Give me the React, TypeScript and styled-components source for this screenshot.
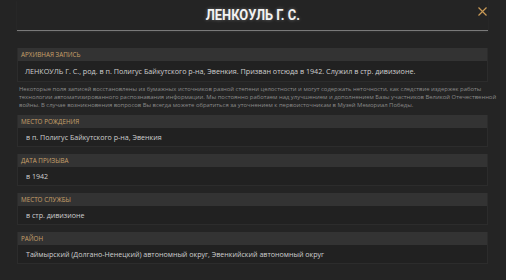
import React from 'react'
import styled, { createGlobalStyle } from 'styled-components'

const GlobalStyle = createGlobalStyle`
  body {
    margin: 0;
    background: #242424;
    font-family: "Open Sans", "Noto Sans", sans-serif;
  }
`

type Field = { label: string; value: string }

const fields: Field[] = [
  { label: 'Место рождения', value: 'в п. Полигус Байкутского р-на, Эвенкия' },
  { label: 'Дата призыва', value: 'в 1942' },
  { label: 'Место службы', value: 'в стр. дивизионе' },
  { label: 'Район', value: 'Таймырский (Долгано-Ненецкий) автономный округ, Эвенкийский автономный округ' },
]

const noteLines = [
  'Некоторые поля записей восстановлены из бумажных источников разной степени целостности и могут содержать неточности, как следствие издержек работы',
  'технологии автоматизированного распознавания информации. Мы постоянно работаем над улучшением и дополнением Базы участников Великой Отечественной',
  'войны. В случае возникновения вопросов Вы всегда можете обратиться за уточнением к первоисточникам в Музей Мемориал Победы.',
]

const App = () => {
  return (
    <Page>
      <GlobalStyle />
      <Header>
        <Title>ЛЕНКОУЛЬ Г. С.</Title>
        <Close aria-label="close">
          <svg width="9" height="9" viewBox="0 0 9 9">
            <path d="M0.5 0.5 L8.5 8.5 M8.5 0.5 L0.5 8.5" stroke="#c99a56" strokeWidth="1.2" />
          </svg>
        </Close>
      </Header>

      <Body>
        <Section>
          <Label>Архивная запись</Label>
          <Value big>
            ЛЕНКОУЛЬ Г. С., род. в п. Полигус Байкутского р-на, Эвенкия. Призван отсюда в 1942. Служил в стр. дивизионе.
          </Value>
        </Section>

        <Note>
          {noteLines.map((l) => (
            <NoteLine key={l}>{l}</NoteLine>
          ))}
        </Note>

        <List>
          {fields.map((f) => (
            <Section key={f.label}>
              <Label>{f.label}</Label>
              <Value>{f.value}</Value>
            </Section>
          ))}
        </List>
      </Body>
    </Page>
  )
}

export default App

const Page = styled.div`
  width: 506px;
  height: 280px;
  overflow: hidden;
  position: relative;
  background: #242424;
`

const Header = styled.div`
  margin: 0 18px 0 17px;
  height: 30px;
  border-bottom: 1px solid #7a7a7a;
  box-shadow: 0 1px 2px rgba(255, 255, 255, 0.06);
  display: flex;
  align-items: flex-end;
  justify-content: center;
`

const Title = styled.div`
  font-family: "Roboto", "Liberation Sans", sans-serif;
  font-weight: 700;
  font-size: 15px;
  color: #f2f2f2;
  text-shadow: 0 0 4px rgba(255, 255, 255, 0.35);
  padding-bottom: 6px;
  transform: scaleX(0.86);
`

const Close = styled.div`
  position: absolute;
  top: 7px;
  right: 19px;
  width: 9px;
  height: 9px;
  display: flex;
  cursor: pointer;
`

const Body = styled.div`
  margin: 17px 18px 0 17px;
  display: flex;
  flex-direction: column;
`

const List = styled.div`
  display: flex;
  flex-direction: column;
  gap: 7px;
`

const Section = styled.div`
  display: flex;
  flex-direction: column;
  border: 1px solid #2c2c2c;
  border-top: none;
  background: #212121;
`

const Label = styled.div`
  height: 13px;
  background: #333333;
  color: #c9a06a;
  font-size: 6.3px;
  text-transform: uppercase;
  display: flex;
  align-items: center;
  padding-left: 3px;
`

const Value = styled.div<{ big?: boolean }>`
  display: flex;
  align-items: center;
  padding-left: ${(p) => (p.big ? '7px' : '8px')};
  font-size: ${(p) => (p.big ? '7.2px' : '7.1px')};
  color: #cfcfcf;
  min-height: ${(p) => (p.big ? '20px' : '18px')};
`

const Note = styled.div`
  display: flex;
  flex-direction: column;
  color: #8a8a8a;
  padding: 3px 0 6px 2px;
`

const NoteLine = styled.div`
  font-size: 5.9px;
  line-height: 8px;
  white-space: nowrap;
`
